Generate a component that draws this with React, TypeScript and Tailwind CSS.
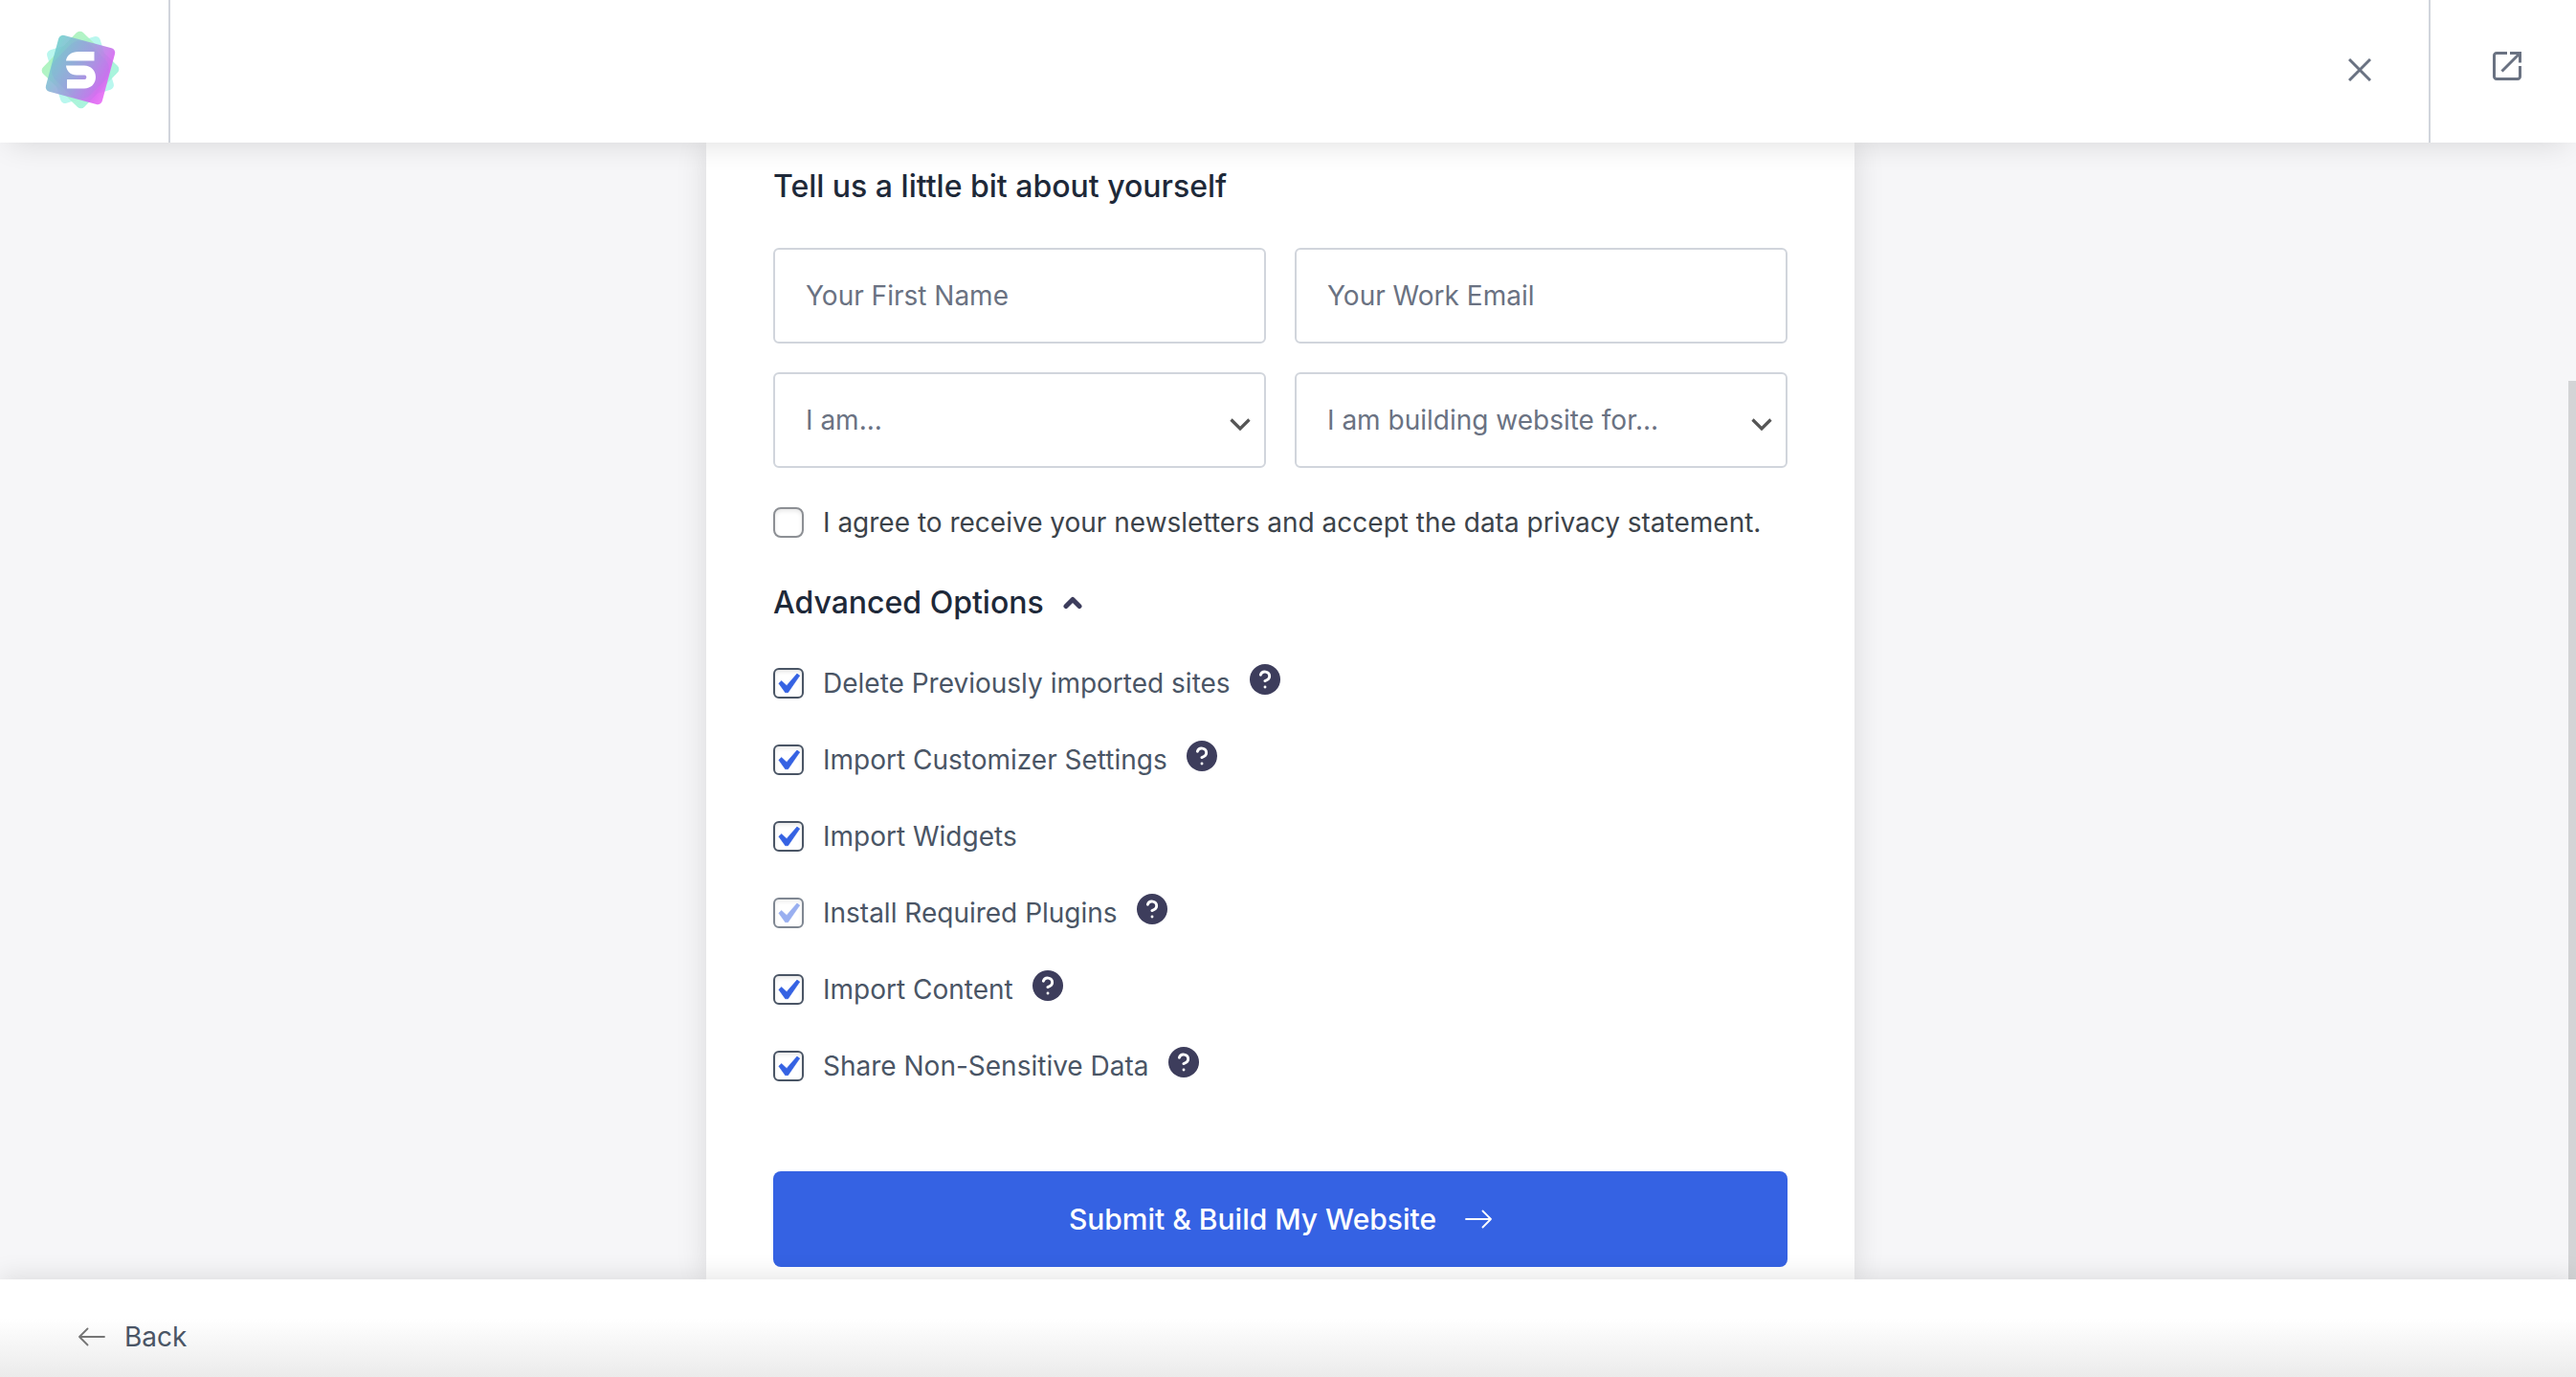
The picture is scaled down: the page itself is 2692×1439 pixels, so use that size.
import React, { useState } from 'react'

interface ImportOption {
  id: string
  label: string
  help?: string
  disabled?: boolean
}

const IMPORT_OPTIONS: ImportOption[] = [
  { id: 'reset', label: 'Delete Previously imported sites', help: 'About deleting imported sites' },
  { id: 'customizer', label: 'Import Customizer Settings', help: 'About customizer settings' },
  { id: 'widgets', label: 'Import Widgets' },
  { id: 'plugins', label: 'Install Required Plugins', help: 'About required plugins', disabled: true },
  { id: 'content', label: 'Import Content', help: 'About importing content' },
  { id: 'share', label: 'Share Non-Sensitive Data', help: 'About shared data' },
]

function Logo() {
  return (
    <svg viewBox="42 31 84 84" className="w-[84px] h-[84px]" aria-hidden="true">
      <defs>
        <linearGradient id="logo-main" x1="46" y1="66" x2="120" y2="84" gradientUnits="userSpaceOnUse">
          <stop offset="0" stopColor="#6bd3cb" />
          <stop offset="0.5" stopColor="#a09ade" />
          <stop offset="0.85" stopColor="#d95ff2" />
          <stop offset="1" stopColor="#ea6bf5" />
        </linearGradient>
        <linearGradient id="logo-green" x1="43" y1="73" x2="125" y2="73" gradientUnits="userSpaceOnUse">
          <stop offset="0" stopColor="#a9f2b4" />
          <stop offset="0.5" stopColor="#a8f3cd" />
          <stop offset="1" stopColor="#9df3e0" />
        </linearGradient>
      </defs>
      <rect x="55" y="44" width="58" height="58" rx="5" fill="#b9f7ee" transform="rotate(-17 84 73)" />
      <rect x="54" y="43" width="60" height="60" rx="5" fill="url(#logo-green)" fillOpacity="0.9" transform="rotate(44 84 73)" />
      <rect x="53.5" y="42.5" width="61" height="61" rx="5" fill="url(#logo-main)" fillOpacity="0.88" transform="rotate(15 84 73)" />
      <rect x="58" y="47" width="52" height="52" rx="16" fill="#8a8fe0" fillOpacity="0.14" transform="rotate(45 84 73)" />
      <path fill="#fff" d="M98.500 54H82C74.500 54 69.500 58 69 63.500H98.500Z" />
      <path fill="#fff" d="M69 68.500H88C95 68.500 100 73.500 100 80.500S95 92.500 88 92.500H70V83H88.500C91 83 91 78.500 88.500 78.500H80C74 78.500 69.500 74.500 69 68.500Z" />
    </svg>
  )
}

function ArrowIcon({ className }: { className: string }) {
  return (
    <svg viewBox="0 0 28 20" fill="none" stroke="currentColor" strokeWidth="1.8" strokeLinecap="round" strokeLinejoin="round" className={className} aria-hidden="true">
      <path d="M1 10H27M18.500 1.500L27 10L18.500 18.500" />
    </svg>
  )
}

interface CheckboxProps {
  id: string
  checked: boolean
  onChange: (checked: boolean) => void
  disabled?: boolean
  borderClass: string
}

function Checkbox({ id, checked, onChange, disabled = false, borderClass }: CheckboxProps) {
  return (
    <span className="grid w-8 h-8 shrink-0">
      <input
        id={id}
        type="checkbox"
        checked={checked}
        disabled={disabled}
        onChange={(e) => onChange(e.target.checked)}
        className={`col-start-1 row-start-1 w-8 h-8 appearance-none border-2 bg-white shadow-[inset_0_2px_4px_rgba(0,0,0,0.1)] disabled:opacity-70 ${borderClass}`}
      />
      {checked && (
        <svg
          viewBox="3 2 15.2 15.2"
          className={`relative col-start-1 row-start-1 w-8 h-8 pointer-events-none ${disabled ? 'opacity-50' : ''}`}
          aria-hidden="true"
        >
          <path
            d="M14.830 4.890l1.340.940-5.810 8.380H9.020L5.780 9.670l1.340-1.250 2.570 2.400z"
            fill="#3562e3"
            stroke="#3562e3"
            strokeWidth="0.3"
            strokeLinejoin="round"
          />
        </svg>
      )}
    </span>
  )
}

function SelectField({ label, options }: { label: string; options: string[] }) {
  return (
    <div className="relative">
      <select
        aria-label={label}
        defaultValue=""
        className="w-full h-[100px] pl-8 pr-14 appearance-none rounded-md border-2 border-gray-300 bg-white text-[28px] text-gray-500"
      >
        <option value="">{label}</option>
        {options.map((option) => (
          <option key={option} value={option}>
            {option}
          </option>
        ))}
      </select>
      <svg
        viewBox="0 0 22 14"
        fill="none"
        stroke="#555"
        strokeWidth="3.2"
        className="absolute right-4 top-12 w-[22px] h-[14px] pointer-events-none"
        aria-hidden="true"
      >
        <path d="M1.500 1.500L11 11L20.500 1.500" />
      </svg>
    </div>
  )
}

export default function App() {
  const [subscribed, setSubscribed] = useState(false)
  const [showAdvanced, setShowAdvanced] = useState(true)
  const [selected, setSelected] = useState<string[]>(IMPORT_OPTIONS.map((option) => option.id))

  const toggleOption = (id: string, checked: boolean) => {
    setSelected((prev) => (checked ? [...prev, id] : prev.filter((item) => item !== id)))
  }

  return (
    <div className="flex flex-col h-screen overflow-hidden bg-[#f6f6f8] font-[Inter,sans-serif] [font-optical-sizing:none] text-[28px] leading-8 text-gray-600">
      <header className="relative z-10 flex h-[149px] shrink-0 bg-white shadow-[0_10px_30px_-10px_rgba(0,0,0,0.14)]">
        <div className="flex items-center justify-center w-[178px] pr-2 pb-1 border-r-2 border-gray-300">
          <Logo />
        </div>
        <div className="flex flex-1 items-center justify-end pr-15 pb-1">
          <button type="button" aria-label="Close" className="text-gray-500">
            <svg viewBox="0 0 24 24" fill="none" stroke="currentColor" strokeWidth="3" className="w-6 h-6" aria-hidden="true">
              <path d="M1 1L23 23M23 1L1 23" />
            </svg>
          </button>
        </div>
        <div className="flex items-center justify-center w-[154px] pl-2 pb-3 border-l-2 border-gray-300">
          <a href="#site" aria-label="Open site in new tab" className="text-gray-500">
            <svg viewBox="0 0 30 30" fill="none" stroke="currentColor" strokeWidth="3" className="w-[30px] h-[30px]" aria-hidden="true">
              <path d="M15 1.500H4A2.500 2.500 0 0 0 1.500 4V26A2.500 2.500 0 0 0 4 28.500H26A2.500 2.500 0 0 0 28.500 26V15" />
              <path d="M18 1.500H28.500V11.500M28 2L9.500 20.500" />
            </svg>
          </a>
        </div>
      </header>

      <div className="flex flex-1 min-h-0">
        <main className="flex flex-1 justify-center pr-2">
          <form
            onSubmit={(e) => e.preventDefault()}
            className="w-full max-w-[1200px] px-[70px] pt-[26px] bg-white shadow-[0_0_30px_rgba(0,0,0,0.12)]"
          >
            <h2 className="text-[32px] leading-10 font-medium text-gray-800">Tell us a little bit about yourself</h2>

            <div className="grid grid-cols-2 gap-[30px] mt-11">
              <input
                type="text"
                aria-label="Your First Name"
                placeholder="Your First Name"
                className="w-full h-[100px] px-8 rounded-md border-2 border-gray-300 bg-white placeholder:text-gray-500"
              />
              <input
                type="email"
                aria-label="Your Work Email"
                placeholder="Your Work Email"
                className="w-full h-[100px] px-8 rounded-md border-2 border-gray-300 bg-white placeholder:text-gray-500"
              />
              <SelectField label="I am..." options={['Beginner', 'Intermediate', 'Expert']} />
              <SelectField label="I am building website for..." options={['Myself', 'My company', 'A client']} />
            </div>

            <div className="flex items-center gap-5 mt-[41px]">
              <Checkbox id="subscribe" checked={subscribed} onChange={setSubscribed} borderClass="rounded-lg border-[#8c8f94]" />
              <label htmlFor="subscribe" className="text-[#3c434a]">
                I agree to receive your newsletters and accept the data privacy statement.
              </label>
            </div>

            <button
              type="button"
              aria-expanded={showAdvanced}
              onClick={() => setShowAdvanced(!showAdvanced)}
              className="flex items-center gap-5 mt-12 text-[32px] leading-10 font-medium text-gray-800"
            >
              Advanced Options
              <svg
                viewBox="0 0 20 14"
                fill="none"
                stroke="#3d3d5c"
                strokeWidth="5"
                strokeLinecap="round"
                strokeLinejoin="round"
                className={showAdvanced ? 'w-5 h-[14px]' : 'w-5 h-[14px] rotate-180'}
                aria-hidden="true"
              >
                <path d="M3 10.500L10 3.500L17 10.500" />
              </svg>
            </button>

            {showAdvanced && (
              <div className="flex flex-col gap-10 mt-11">
                {IMPORT_OPTIONS.map((option) => (
                  <div key={option.id} className="flex items-center gap-5 h-10">
                    <Checkbox
                      id={option.id}
                      checked={selected.includes(option.id)}
                      onChange={(checked) => toggleOption(option.id, checked)}
                      disabled={option.disabled}
                      borderClass="rounded-md border-gray-600"
                    />
                    <label htmlFor={option.id}>{option.label}</label>
                    {option.help && (
                      <button type="button" aria-label={option.help} className="mb-2">
                        <svg viewBox="2 2 20 20" fill="none" className="w-8 h-8" aria-hidden="true">
                          <circle cx="12" cy="12" r="10" fill="#3d3d5c" />
                          <path
                            d="M9.090 9a3 3 0 0 1 5.830 1c0 2-3 3-3 3M12 17h.010"
                            stroke="#fff"
                            strokeWidth="1.8"
                            strokeLinecap="round"
                            strokeLinejoin="round"
                          />
                        </svg>
                      </button>
                    )}
                  </div>
                ))}
              </div>
            )}

            <button
              type="submit"
              className="flex items-center justify-center gap-[30px] w-full h-[100px] mt-[90px] rounded-lg bg-[#3562e3] text-[30px] font-medium text-white"
            >
              Submit &amp; Build My Website
              <ArrowIcon className="w-7 h-5" />
            </button>
          </form>
        </main>

        {/* Scrollbar thumb */}
        <div className="w-2 pt-[249px]">
          <div className="h-full bg-[#d3d4d6]" />
        </div>
      </div>

      <footer className="relative z-10 flex items-center h-[102px] shrink-0 pt-[18px] px-[82px] bg-linear-to-b from-white from-40% to-[#ebebeb] shadow-[0_-4px_24px_rgba(0,0,0,0.1)]">
        <button type="button" className="flex items-center gap-5">
          <ArrowIcon className="w-7 h-5 rotate-180 text-[#757575]" />
          Back
        </button>
      </footer>
    </div>
  )
}
